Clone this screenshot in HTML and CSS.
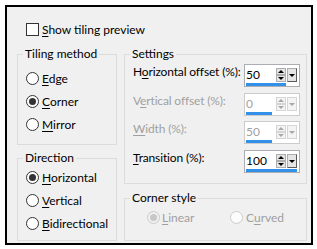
FILE: index.html
```html
<!DOCTYPE html>
<html lang="en">
<head>
    <meta charset="UTF-8">
    <title>Tiling</title>
    <link rel="stylesheet" href="styles.css">
</head>
<body>
    <div class="dialog">
        <label class="check-row"><span class="checkbox"></span><span><u>S</u>how tiling preview</span></label>
        <div class="columns">
            <div class="col col-left">
                <fieldset class="group tiling">
                    <legend>Tiling method</legend>
                    <label class="radio"><span class="dot"></span><span><u>E</u>dge</span></label>
                    <label class="radio"><span class="dot checked"></span><span><u>C</u>orner</span></label>
                    <label class="radio"><span class="dot"></span><span><u>M</u>irror</span></label>
                </fieldset>
                <fieldset class="group direction">
                    <legend>Direction</legend>
                    <label class="radio"><span class="dot checked"></span><span><u>H</u>orizontal</span></label>
                    <label class="radio"><span class="dot"></span><span><u>V</u>ertical</span></label>
                    <label class="radio"><span class="dot"></span><span><u>B</u>idirectional</span></label>
                </fieldset>
            </div>
            <div class="col col-right">
                <fieldset class="group settings">
                    <legend>Settings</legend>
                    <div class="field">
                        <span class="field-label">H<u>o</u>rizontal offset (%):</span>
                        <div class="spin">
                            <div class="spin-top">
                                <span class="spin-value">50</span>
                                <span class="spin-arrows"><span class="arrow-btn"><span class="tri-up"></span></span><span class="arrow-btn"><span class="tri-down"></span></span></span>
                                <span class="spin-drop"><span class="tri-down"></span></span>
                            </div>
                            <div class="spin-bar" style="width: 40px"></div>
                        </div>
                    </div>
                    <div class="field disabled">
                        <span class="field-label">V<u>e</u>rtical offset (%):</span>
                        <div class="spin">
                            <div class="spin-top">
                                <span class="spin-value">0</span>
                                <span class="spin-arrows"><span class="arrow-btn"><span class="tri-up"></span></span><span class="arrow-btn"><span class="tri-down"></span></span></span>
                                <span class="spin-drop"><span class="tri-down"></span></span>
                            </div>
                            <div class="spin-bar" style="width: 26px"></div>
                        </div>
                    </div>
                    <div class="field disabled">
                        <span class="field-label"><u>W</u>idth (%):</span>
                        <div class="spin">
                            <div class="spin-top">
                                <span class="spin-value">50</span>
                                <span class="spin-arrows"><span class="arrow-btn"><span class="tri-up"></span></span><span class="arrow-btn"><span class="tri-down"></span></span></span>
                                <span class="spin-drop"><span class="tri-down"></span></span>
                            </div>
                            <div class="spin-bar" style="width: 26px"></div>
                        </div>
                    </div>
                    <div class="field">
                        <span class="field-label"><u>T</u>ransition (%):</span>
                        <div class="spin">
                            <div class="spin-top">
                                <span class="spin-value">100</span>
                                <span class="spin-arrows"><span class="arrow-btn"><span class="tri-up"></span></span><span class="arrow-btn"><span class="tri-down"></span></span></span>
                                <span class="spin-drop"><span class="tri-down"></span></span>
                            </div>
                            <div class="spin-bar" style="width: 51px"></div>
                        </div>
                    </div>
                </fieldset>
                <fieldset class="group corner">
                    <legend>Corner style</legend>
                    <div class="corner-row">
                        <label class="radio disabled linear"><span class="dot checked"></span><span><u>L</u>inear</span></label>
                        <label class="radio disabled"><span class="dot"></span><span>C<u>u</u>rved</span></label>
                    </div>
                </fieldset>
            </div>
        </div>
    </div>
</body>
</html>
```

FILE: styles.css
```css
body {
    margin: 0;
    background-color: #ffffff;
    font-family: Lato, "Liberation Sans", sans-serif;
    font-size: 12px;
    color: #000000;
}
u {
    text-decoration-thickness: 1px;
    text-underline-offset: 2px;
}
.dialog {
    margin: 5px;
    width: 304px;
    height: 236px;
    border: 2px solid #000000;
    background-color: #f0f0f0;
}
.check-row {
    display: flex;
    align-items: center;
    gap: 3px;
    height: 16px;
    margin: 14px 0 0 19px;
}
.checkbox {
    flex-shrink: 0;
    width: 13px;
    height: 13px;
    box-sizing: border-box;
    border: 1px solid #333333;
    background-color: #ffffff;
}
.columns {
    display: grid;
    grid-template-columns: 100px 183px;
    column-gap: 7px;
    margin: 9px 0 0 10px;
}
.col {
    display: flex;
    flex-direction: column;
}
.col-left { gap: 5px; }
.col-right { gap: 6px; }

/* group boxes */
.group {
    margin: 0;
    padding: 0 8px;
    min-width: 0;
    box-sizing: border-box;
    border: 1px solid #dcdcdc;
}
.group legend {
    padding: 0 2px;
    margin-left: -3px;
    line-height: 16px;
    white-space: nowrap;
}
.tiling { height: 99px; padding-top: 5px; }
.direction { height: 91px; }
.settings { height: 138px; padding: 2px 6px 0 8px; }
.corner { height: 51px; padding-left: 22px; }
.corner legend { margin-left: -17px; }

/* radios */
.radio {
    display: flex;
    align-items: center;
    gap: 3px;
    height: 23px;
    white-space: nowrap;
}
.dot {
    display: flex;
    flex-shrink: 0;
    align-items: center;
    justify-content: center;
    width: 13px;
    height: 13px;
    box-sizing: border-box;
    border: 1px solid #333333;
    border-radius: 50%;
    background-color: #ffffff;
}
.dot.checked::after {
    content: "";
    width: 7px;
    height: 7px;
    border-radius: 50%;
    background-color: #333333;
}
.corner-row {
    display: flex;
}
.linear { width: 83px; gap: 2px; }
.radio.disabled { color: #a0a0a0; }
.radio.disabled .dot {
    border-color: #cccccc;
    background-color: #fcfcfc;
}
.radio.disabled .dot.checked {
    background-color: #f0f0f0;
}
.radio.disabled .dot.checked::after {
    background-color: #c8c8c8;
}

/* spin fields */
.field {
    display: flex;
    justify-content: space-between;
    align-items: flex-start;
    height: 23px;
    margin-bottom: 6px;
}
.field:nth-child(3) { margin-bottom: 5px; }
.field-label {
    line-height: 16px;
    letter-spacing: -0.15px;
    white-space: nowrap;
}
.field.disabled .field-label { color: #a0a0a0; }
.spin {
    flex-shrink: 0;
    width: 56px;
    height: 23px;
    box-sizing: border-box;
    border: 1px solid #abadb3;
    background-color: #ffffff;
    padding-top: 3px;
}
.spin-top {
    display: flex;
    height: 14px;
    padding-right: 2px;
    gap: 1px;
}
.spin-value {
    flex: 1;
    padding-left: 1px;
    line-height: 14px;
}
.spin-arrows {
    display: flex;
    flex-direction: column;
    width: 10px;
}
.arrow-btn {
    display: flex;
    align-items: center;
    justify-content: center;
    height: 7px;
    box-sizing: border-box;
    border: 1px solid #adadad;
    background-color: #e5e5e5;
}
.spin-drop {
    display: flex;
    align-items: center;
    justify-content: center;
    width: 10px;
    box-sizing: border-box;
    border: 1px solid #adadad;
    border-right-color: #5a5a5a;
    border-bottom-color: #5a5a5a;
    background-color: #e5e5e5;
}
.tri-up {
    border-left: 3px solid transparent;
    border-right: 3px solid transparent;
    border-bottom: 3px solid #000000;
}
.tri-down {
    border-left: 3px solid transparent;
    border-right: 3px solid transparent;
    border-top: 3px solid #000000;
}
.spin-bar {
    height: 3px;
    margin: 1px 0 0 1px;
    background-color: #3390e8;
}
.field.disabled .spin { border-color: #cccccc; }
.field.disabled .spin-value { color: #a0a0a0; }
.field.disabled .arrow-btn,
.field.disabled .spin-drop {
    border-color: #d5d5d5;
    background-color: #f4f4f4;
}
.field.disabled .tri-up { border-bottom-color: #a8a8a8; }
.field.disabled .tri-down { border-top-color: #a8a8a8; }
```
